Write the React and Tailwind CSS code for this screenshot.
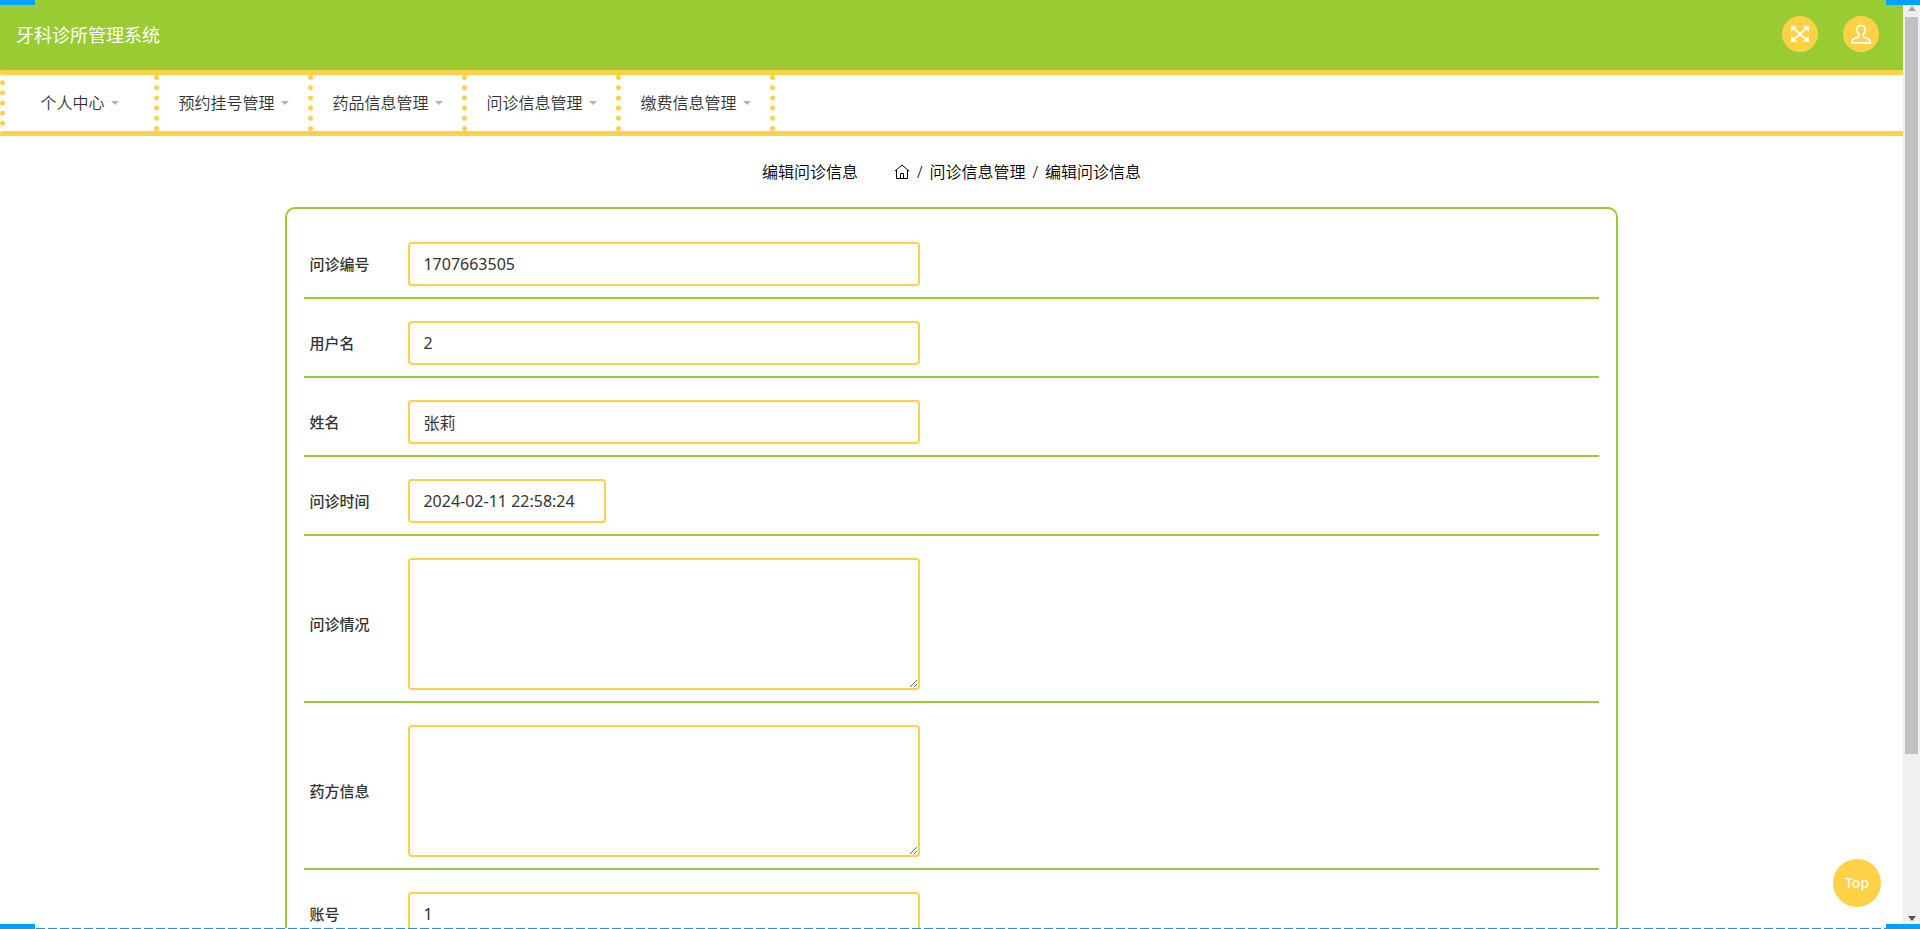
import React, { useState } from "react";

const menus = ["个人中心", "预约挂号管理", "药品信息管理", "问诊信息管理", "缴费信息管理"];

const fields = [
  { name: "wenzhenbianhao", label: "问诊编号", type: "text" },
  { name: "yonghuming", label: "用户名", type: "text" },
  { name: "xingming", label: "姓名", type: "text" },
  { name: "wenzhenshijian", label: "问诊时间", type: "datetime" },
  { name: "wenzhenqingkuang", label: "问诊情况", type: "textarea" },
  { name: "yaofangxinxi", label: "药方信息", type: "textarea" },
  { name: "zhanghao", label: "账号", type: "text" },
];

const FullscreenIcon = () => (
  <svg width="20" height="18" viewBox="0 0 20 18" fill="none" stroke="currentColor" strokeWidth="1.7">
    <path d="M2 2l16 14M18 2L2 16" />
    <path d="M1.9 6V1.9h4.6M13.5 1.9h4.6V6M18.1 12v4.1h-4.6M6.5 16.1H1.9V12" />
  </svg>
);

const UserIcon = () => (
  <svg width="20" height="20" viewBox="0 0 20 20" fill="none" stroke="currentColor" strokeWidth="1.7" strokeLinejoin="round">
    <path d="M10 1.5C7.2 1.5 5.8 3.2 5.8 5.5c0 2.2.7 3.8 2.1 5.2v1.5c0 .7-.5 1-1.2 1.2-2.8.8-4.9 1.7-5.6 3.2-.3.6-.3 1.4-.3 2.2h18.400c0-.8 0-1.600-.3-2.200-.7-1.500-2.800-2.400-5.600-3.200-.7-.2-1.200-.5-1.200-1.200v-1.500c1.400-1.400 2.100-3 2.100-5.200 0-2.300-1.400-4-4.200-4z" />
  </svg>
);

const HomeIcon = () => (
  <svg width="16" height="16" viewBox="0 0 16 16" fill="none" stroke="currentColor" strokeWidth="1">
    <path d="M.8 7.2L8 1l7.2 6.2" />
    <path d="M2.5 6v8.5h11V6" />
    <path d="M6.5 14.5v-5h3v5" />
  </svg>
);

const Scrollbar = () => (
  <div className="flex w-[17px] shrink-0 flex-col items-center bg-[#f0f0f0] pt-1.5 pb-2" aria-hidden="true">
    <svg width="8" height="5" viewBox="0 0 8 5" className="mb-1.5 shrink-0 fill-[#a3a3a3]">
      <path d="M4 0l4 5H0z" />
    </svg>
    <div className="flex w-full flex-1 flex-col items-center">
      <div className="h-[82%] w-[13px] bg-[#c1c1c1]" />
    </div>
    <svg width="8" height="5" viewBox="0 0 8 5" className="shrink-0 fill-[#505050]">
      <path d="M0 0h8L4 5z" />
    </svg>
  </div>
);

const App = () => {
  const [form, setForm] = useState({
    wenzhenbianhao: "1707663505",
    yonghuming: "2",
    xingming: "张莉",
    wenzhenshijian: "2024-02-11 22:58:24",
    wenzhenqingkuang: "",
    yaofangxinxi: "",
    zhanghao: "1",
  });

  const handleChange = (e) => setForm({ ...form, [e.target.name]: e.target.value });

  const renderField = (field) => {
    const props = { id: field.name, name: field.name, value: form[field.name], onChange: handleChange };
    if (field.type === "textarea") {
      return (
        <textarea
          {...props}
          className="block h-[132px] w-full max-w-lg resize rounded border-2 border-[#ffd147] bg-white px-[13px] py-2 text-base outline-none"
        />
      );
    }
    if (field.type === "datetime") {
      return (
        <input
          {...props}
          type="text"
          className="block h-11 w-[198px] rounded border-2 border-[#ffd147] bg-white px-[13px] text-base outline-none"
        />
      );
    }
    return (
      <input
        {...props}
        type="text"
        className="block h-11 w-full max-w-lg rounded border-2 border-[#ffd147] bg-white px-[13px] text-base outline-none"
      />
    );
  };

  return (
    <div className="relative flex h-screen overflow-hidden bg-white font-['Noto_Sans','Noto_Sans_CJK_SC',sans-serif] text-[15px] text-[#333]">
      <div className="min-w-0 flex-1 overflow-hidden">
        <header className="flex h-[70px] items-start justify-between bg-[#99cc33] px-4 text-white">
          <h1 className="py-5 text-lg leading-[30px]">牙科诊所管理系统</h1>
          <div className="flex gap-[25px] pt-4 pr-2">
            <button type="button" aria-label="全屏" className="flex size-9 items-center justify-center rounded-full bg-[#ffd147]">
              <FullscreenIcon />
            </button>
            <button type="button" aria-label="用户" className="flex size-9 items-center justify-center rounded-full bg-[#ffd147]">
              <UserIcon />
            </button>
          </div>
        </header>

        <nav className="border-y-[5px] border-l-[5px] border-[#ffd147] [border-left-style:dotted]">
          <ul className="flex h-14">
            {menus.map((menu) => (
              <li key={menu} className="w-[154px] border-r-[5px] border-dotted border-[#ffd147]">
                <a href="#" className="flex h-full items-center justify-center gap-1.5 text-base font-[350]">
                  {menu}
                  <svg width="8" height="4" viewBox="0 0 8 4" className="fill-[#b3b3b3]">
                    <path d="M0 0h8L4 4z" />
                  </svg>
                </a>
              </li>
            ))}
          </ul>
        </nav>

        <div className="flex h-[71px] items-center justify-center gap-9 text-base font-[350] text-black">
          <h2>编辑问诊信息</h2>
          <div className="flex items-center gap-[7px]">
            <a href="#" aria-label="首页">
              <HomeIcon />
            </a>
            <span>/</span>
            <a href="#">问诊信息管理</a>
            <span>/</span>
            <span>编辑问诊信息</span>
          </div>
        </div>

        <form className="mx-auto w-[70%] rounded-[10px] border-2 border-[#99cc33] px-[17px] py-[11px]">
          {fields.map((field) => (
            <div key={field.name} className="flex items-center border-b-2 border-[#99cc33] pt-[22px] pb-[11px]">
              <label htmlFor={field.name} className="w-[104px] shrink-0 pl-[5px] font-medium">
                {field.label}
              </label>
              <div className="flex-1">{renderField(field)}</div>
            </div>
          ))}
        </form>
      </div>

      <Scrollbar />

      <button
        type="button"
        className="absolute right-[39px] bottom-[22px] size-12 rounded-full bg-[#ffd147] text-sm font-medium text-white"
      >
        Top
      </button>

      {/* frame: corner marks and dashed bottom edge */}
      <div className="pointer-events-none absolute inset-0" aria-hidden="true">
        <div className="absolute inset-x-0 bottom-0 h-px bg-[repeating-linear-gradient(to_right,#00a2ff_0_9px,#fff_9px_12px)]" />
        <div className="absolute top-0 left-0 h-[5px] w-[35px] bg-[#00a2ff]" />
        <div className="absolute top-0 right-0 h-[5px] w-[34px] bg-[#00a2ff]" />
        <div className="absolute bottom-0 left-0 h-[5px] w-[35px] bg-[#00a2ff]" />
        <div className="absolute right-0 bottom-0 h-[5px] w-[34px] bg-[#00a2ff]" />
      </div>
    </div>
  );
};

export default App;
